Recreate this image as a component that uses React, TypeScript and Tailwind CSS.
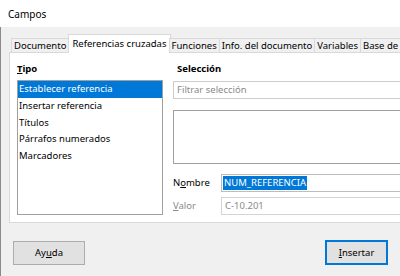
const tabs = [
  { label: "Documento", active: false },
  { label: "Referencias cruzadas", active: true },
  { label: "Funciones", active: false },
  { label: "Info. del documento", active: false },
  { label: "Variables", active: false },
  { label: "Base de datos", active: false },
];

const tipos = [
  "Establecer referencia",
  "Insertar referencia",
  "Títulos",
  "Párrafos numerados",
  "Marcadores",
];

export default function App() {
  return (
    <div className="w-[400px] h-[276px] overflow-hidden bg-[#f0f0f0] text-black font-['Noto_Sans',sans-serif] text-[9.5px] leading-[12px] select-none">
      {/* title bar */}
      <div className="h-[27px] bg-white flex items-center pl-[8px] text-[10px]">Campos</div>

      <div className="h-[249px] border-l border-[#8a8a8a] flex flex-col">
        {/* tabs */}
        <div className="flex items-end h-[19px] mt-[7px] pl-[10px] whitespace-nowrap relative z-10">
          {tabs.map((t) =>
            t.active ? (
              <div
                key={t.label}
                className="h-[19px] -mx-[1px] px-[3px] pt-[3px] bg-white border border-b-0 border-[#d9d9d9]"
              >
                {t.label}
              </div>
            ) : (
              <div
                key={t.label}
                className="h-[15px] px-[2px] bg-[#f0f0f0] border border-[#d9d9d9] -ml-px first:ml-0 flex items-center"
              >
                {t.label}
              </div>
            )
          )}
        </div>

        {/* panel */}
        <div className="ml-[8px] -mt-px w-[420px] h-[171px] shrink-0 bg-white border border-[#d9d9d9] flex gap-[10px] pl-[7px] pt-[10px]">
          {/* Tipo */}
          <div className="w-[146px] flex flex-col">
            <div className="font-bold h-[12px]">
              <span className="underline">T</span>ipo
            </div>
            <div className="mt-[5px] h-[135px] border border-[#a0a0a0] flex flex-col">
              {tipos.map((item, i) => (
                <div
                  key={item}
                  className={`h-[16.7px] flex items-center pl-[1px] ${i === 0 ? "bg-[#0078d7] text-white" : ""}`}
                >
                  {item}
                </div>
              ))}
            </div>
          </div>

          {/* Selección */}
          <div className="flex-1 flex flex-col">
            <div className="font-bold h-[12px] pl-[4px]">Selección</div>
            <div className="mt-[6px] h-[18px] border border-[#cdcdcd] flex items-center pl-[3px] text-[#8a8a8a]">
              Filtrar selección
            </div>
            <div className="mt-[11px] h-[54px] border border-[#a0a0a0]" />
            <div className="mt-[10px] flex items-center h-[18px]">
              <div className="w-[48px]">
                N<span className="underline">o</span>mbre
              </div>
              <div className="flex-1 h-[18px] border border-[#bdbdbd] flex items-center pl-[1px]">
                <span className="bg-[#0078d7] text-white px-[1px] h-[14px] flex items-center">NUM_REFERENCIA</span>
              </div>
            </div>
            <div className="mt-[5px] flex items-center h-[18px] text-[#8a8a8a]">
              <div className="w-[48px]">
                <span className="underline">V</span>alor
              </div>
              <div className="flex-1 h-[18px] border border-[#d4d4d4] flex items-center pl-[3px]">C-10.201</div>
            </div>
          </div>
        </div>

        {/* footer */}
        <div className="flex items-center justify-between pl-[12px] pr-[12px] mt-[17px]">
          <button className="w-[72px] h-[24px] bg-[#e1e1e1] border border-[#adadad] text-[9.5px]">
            Ay<span className="underline">u</span>da
          </button>
          <button className="w-[63px] h-[25px] bg-[#e1e1e1] border-2 border-[#0078d7] text-[9.5px]">
            <span className="underline">I</span>nsertar
          </button>
        </div>
      </div>
    </div>
  );
}
